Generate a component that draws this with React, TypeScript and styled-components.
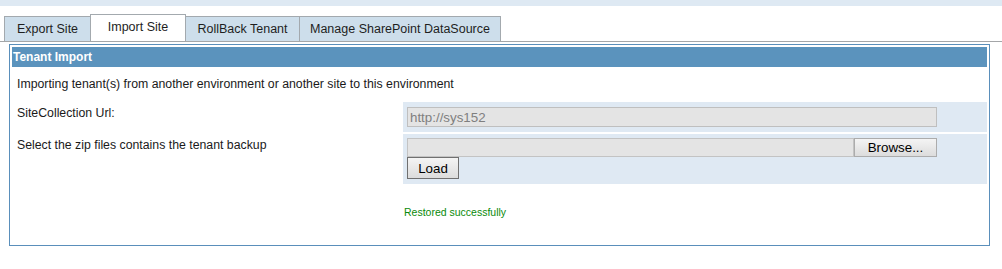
import React from "react";
import styled, { createGlobalStyle } from "styled-components";

const GlobalStyle = createGlobalStyle`
  html, body {
    margin: 0;
    padding: 0;
    background: #ffffff;
  }
  body {
    font-family: "Liberation Sans", Arial, sans-serif;
    font-size: 12.3px;
    color: #1a1a1a;
  }
`;

const Page = styled.div`
  width: 1002px;
  height: 269px;
  overflow: hidden;
`;

const TopBand = styled.div`
  height: 6px;
  background: #dee9f3;
`;

const TabStrip = styled.div`
  display: flex;
  align-items: flex-end;
  height: 27px;
  margin-top: 8px;
  padding-left: 4px;
  border-bottom: 1px solid #a4a6a8;
`;

const Tab = styled.div<{ $active?: boolean; $w: number }>`
  box-sizing: border-box;
  width: ${(p) => p.$w}px;
  height: ${(p) => (p.$active ? "27px" : "25px")};
  padding-top: 5px;
  margin-left: -1px;
  line-height: 15px;
  font-size: 12.5px;
  text-align: center;
  white-space: nowrap;
  color: #1e1e1e;
  background: ${(p) => (p.$active ? "#ffffff" : "#cddeeb")};
  border: 1px solid #a3a9ae;
  border-bottom: none;
  &:first-child {
    margin-left: 0;
  }
`;

const Panel = styled.div`
  margin: 2px 12px 0 9px;
  padding: 2px;
  border: 1px solid #5a8fbb;
`;

const PanelHeader = styled.div`
  height: 20px;
  line-height: 20px;
  padding-left: 1px;
  background: #5b93bd;
  color: #ffffff;
  font-weight: bold;
  font-size: 12px;
`;

const Intro = styled.div`
  padding: 10px 5px;
  line-height: 15px;
`;

const FormGrid = styled.div`
  display: grid;
  grid-template-columns: 391px 1fr;
  row-gap: 2px;
`;

const Label = styled.div`
  padding: 4px 5px 0;
  line-height: 15px;
`;

const FieldCell = styled.div<{ $tight?: boolean }>`
  background: #dfe9f3;
  padding: ${(p) => (p.$tight ? "4px 4px 5px" : "5px 4px")};
`;

const TextInput = styled.input`
  box-sizing: border-box;
  display: block;
  width: 530px;
  height: 20px;
  margin: 0;
  padding: 0 2px;
  font-family: "Liberation Sans", Arial, sans-serif;
  font-size: 13.33px;
  color: #7f7f7f;
  background: #e4e4e4;
  border: 1px solid #bfbfbf;
`;

const FileRow = styled.div`
  display: flex;
  width: 530px;
  height: 19px;
`;

const FileBox = styled.div`
  box-sizing: border-box;
  flex: 1;
  background: #e4e4e4;
  border: 1px solid #c3c3c3;
`;

const Button = styled.button<{ $strong?: boolean }>`
  box-sizing: border-box;
  display: block;
  margin: 0;
  padding: 0;
  width: ${(p) => (p.$strong ? "52px" : "83px")};
  height: ${(p) => (p.$strong ? "22px" : "19px")};
  font-family: "Liberation Sans", Arial, sans-serif;
  font-size: 13.33px;
  color: #000000;
  text-align: center;
  background: linear-gradient(#f4f4f4, #dcdcdc);
  border: 1px solid ${(p) => (p.$strong ? "#707070" : "#acacac")};
  border-radius: 0;
`;

const Status = styled.div`
  grid-column: 2;
  padding: 20px 1px 24px;
  line-height: 13px;
  font-size: 10.5px;
  color: #0a8a0a;
`;

const tabs = [
  { label: "Export Site", w: 87 },
  { label: "Import Site", w: 96 },
  { label: "RollBack Tenant", w: 115 },
  { label: "Manage SharePoint DataSource", w: 202 },
];

export default function App() {
  return (
    <Page>
      <GlobalStyle />
      <TopBand />
      <TabStrip>
        {tabs.map((t) => (
          <Tab key={t.label} $w={t.w} $active={t.label === "Import Site"}>
            {t.label}
          </Tab>
        ))}
      </TabStrip>
      <Panel>
        <PanelHeader>Tenant Import</PanelHeader>
        <Intro>
          Importing tenant(s) from another environment or another site to this
          environment
        </Intro>
        <FormGrid>
          <Label>SiteCollection Url:</Label>
          <FieldCell>
            <TextInput disabled readOnly value="http://sys152" />
          </FieldCell>
          <Label>Select the zip files contains the tenant backup</Label>
          <FieldCell $tight>
            <FileRow>
              <FileBox />
              <Button type="button">Browse...</Button>
            </FileRow>
            <Button type="button" $strong>
              Load
            </Button>
          </FieldCell>
          <Status>Restored successfully</Status>
        </FormGrid>
      </Panel>
    </Page>
  );
}
